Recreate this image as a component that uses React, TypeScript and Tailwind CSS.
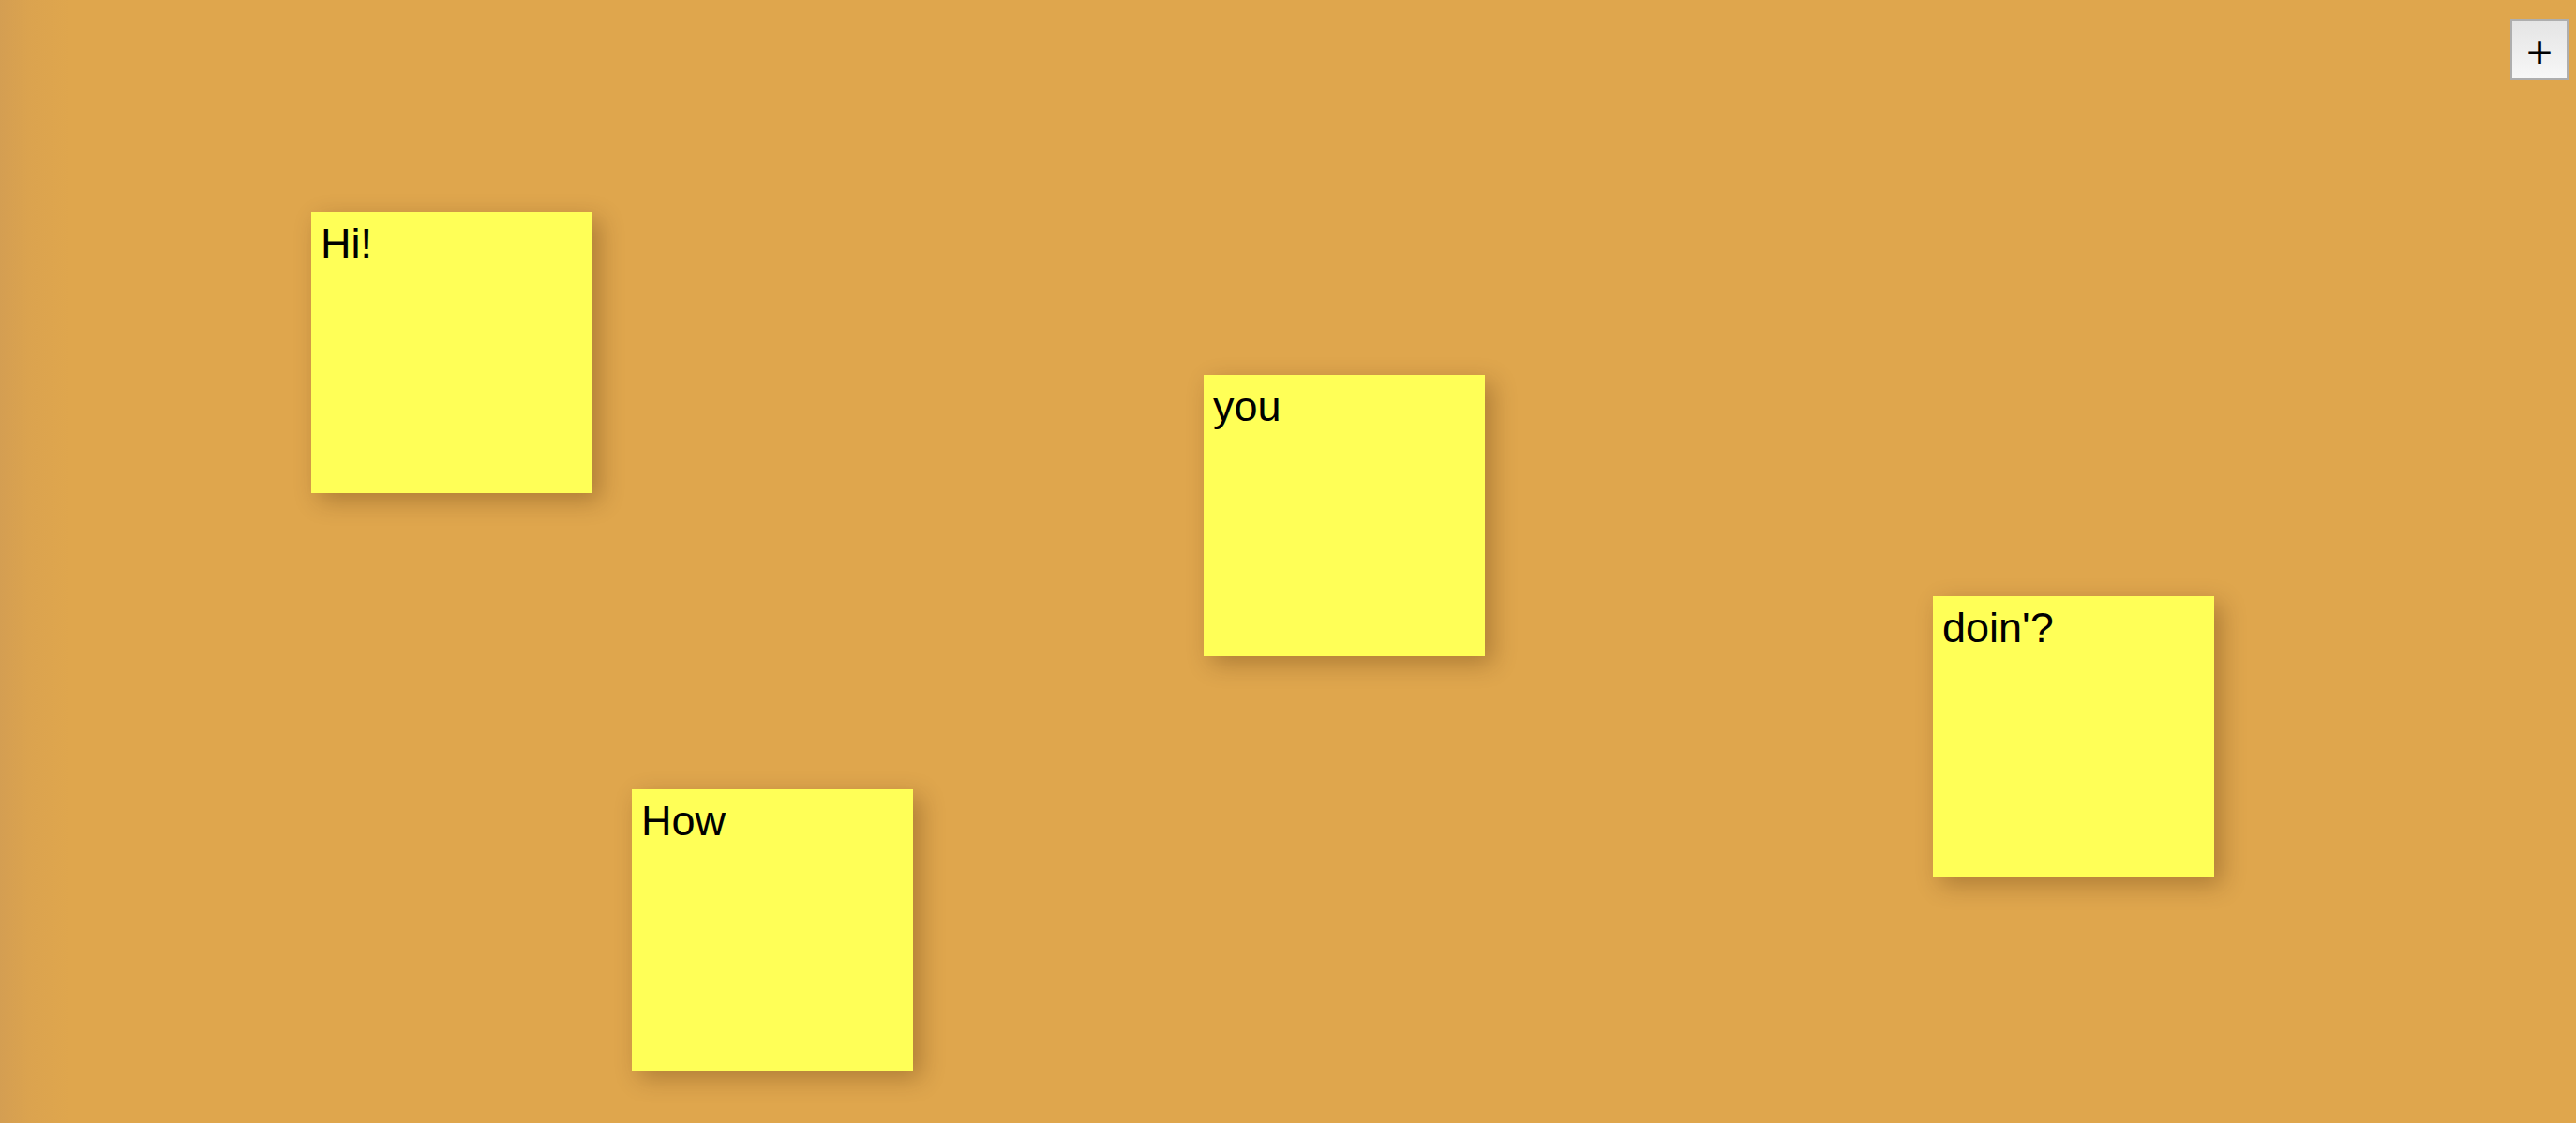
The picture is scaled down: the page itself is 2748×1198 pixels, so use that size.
import React from "react";

const notes = [
  { text: "Hi!", x: 332, y: 226 },
  { text: "you", x: 1284, y: 400 },
  { text: "doin'?", x: 2062, y: 636 },
  { text: "How", x: 674, y: 842 },
];

export default function App() {
  return (
    <div
      className="relative w-[2748px] h-[1198px] overflow-hidden bg-[linear-gradient(to_right,#d49e52_0px,#dba34f_30px,#dfa64d_75px,#dfa64d_100%)]"
      style={{ fontFamily: '"Liberation Sans", Arial, sans-serif' }}
    >
      {notes.map((n) => (
        <div
          key={n.text}
          className="absolute w-[300px] h-[300px] bg-[#ffff57] shadow-[8px_8px_24px_rgba(60,30,0,0.3)] pl-[10px] pt-[8px] text-[45px] leading-[normal] text-black"
          style={{ left: n.x, top: n.y }}
        >
          {n.text}
        </div>
      ))}
      <button className="absolute top-[20px] right-[8px] w-[62px] h-[65px] border-2 border-[#aeaeae] bg-[linear-gradient(to_bottom,#e4e4e4,#f7f7f7)] flex items-center justify-center text-[48px] leading-none text-black">
        <span className="translate-y-[3px]">+</span>
      </button>
    </div>
  );
}
